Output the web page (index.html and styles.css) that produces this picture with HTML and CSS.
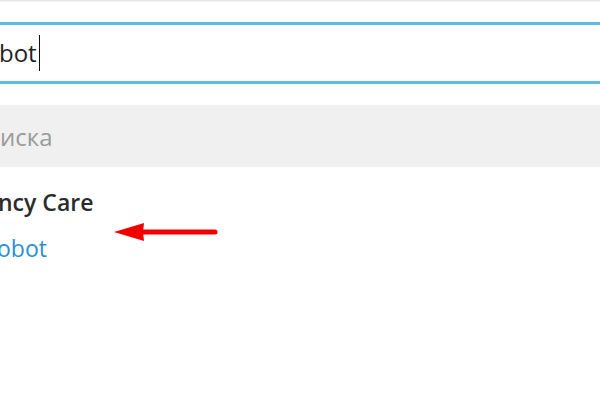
FILE: index.html
```html
<!DOCTYPE html>
<html lang="ru">
<head>
<meta charset="utf-8">
<title>Search</title>
<link rel="stylesheet" href="styles.css">
</head>
<body>
<div class="top"></div>
<div class="search">
  <span class="query">bot</span><span class="caret"></span>
</div>
<div class="section">иска</div>
<div class="result">
  <div class="name">ncy Care</div>
  <div class="user">obot</div>
</div>
<svg class="arrow" width="110" height="26" viewBox="0 0 110 26">
  <line x1="26" y1="12" x2="103" y2="12" stroke="#f20000" stroke-width="5" stroke-linecap="round"/>
  <polygon points="2,12 32,3 31,12 32,21" fill="#f20000"/>
</svg>
</body>
</html>
```
FILE: styles.css
```css
html, body {
  margin: 0;
  padding: 0;
}
body {
  width: 600px;
  height: 400px;
  overflow: hidden;
  background: #ffffff;
  font-family: "Open Sans", "Liberation Sans", sans-serif;
  position: relative;
}
.top {
  height: 1px;
  background: #e6e6e6;
  box-shadow: 0 1px 1px #f2f2f2;
}
.search {
  margin-top: 21px;
  height: 56px;
  border-top: 3px solid #5dbde5;
  border-bottom: 3px solid #5dbde5;
  display: flex;
  align-items: center;
  padding-left: 0;
}
.query {
  font-size: 24px;
  line-height: 1;
  color: #222222;
  margin-left: -1px;
}
.caret {
  width: 1px;
  height: 36px;
  background: #111111;
  margin-left: 2px;
}
.section {
  margin-top: 21px;
  height: 62px;
  background: #f0f0f0;
  display: flex;
  align-items: center;
  font-size: 24px;
  color: #9b9b9b;
  padding-left: 0;
}
.result {
  padding-top: 21px;
}
.name {
  font-size: 23px;
  font-weight: 600;
  line-height: 28px;
  color: #2b2b2b;
  margin-left: -2px;
}
.user {
  margin-top: 18px;
  font-size: 23px;
  line-height: 28px;
  color: #2a8fd6;
  margin-left: -3px;
}
.arrow {
  position: absolute;
  left: 112px;
  top: 220px;
}
```
